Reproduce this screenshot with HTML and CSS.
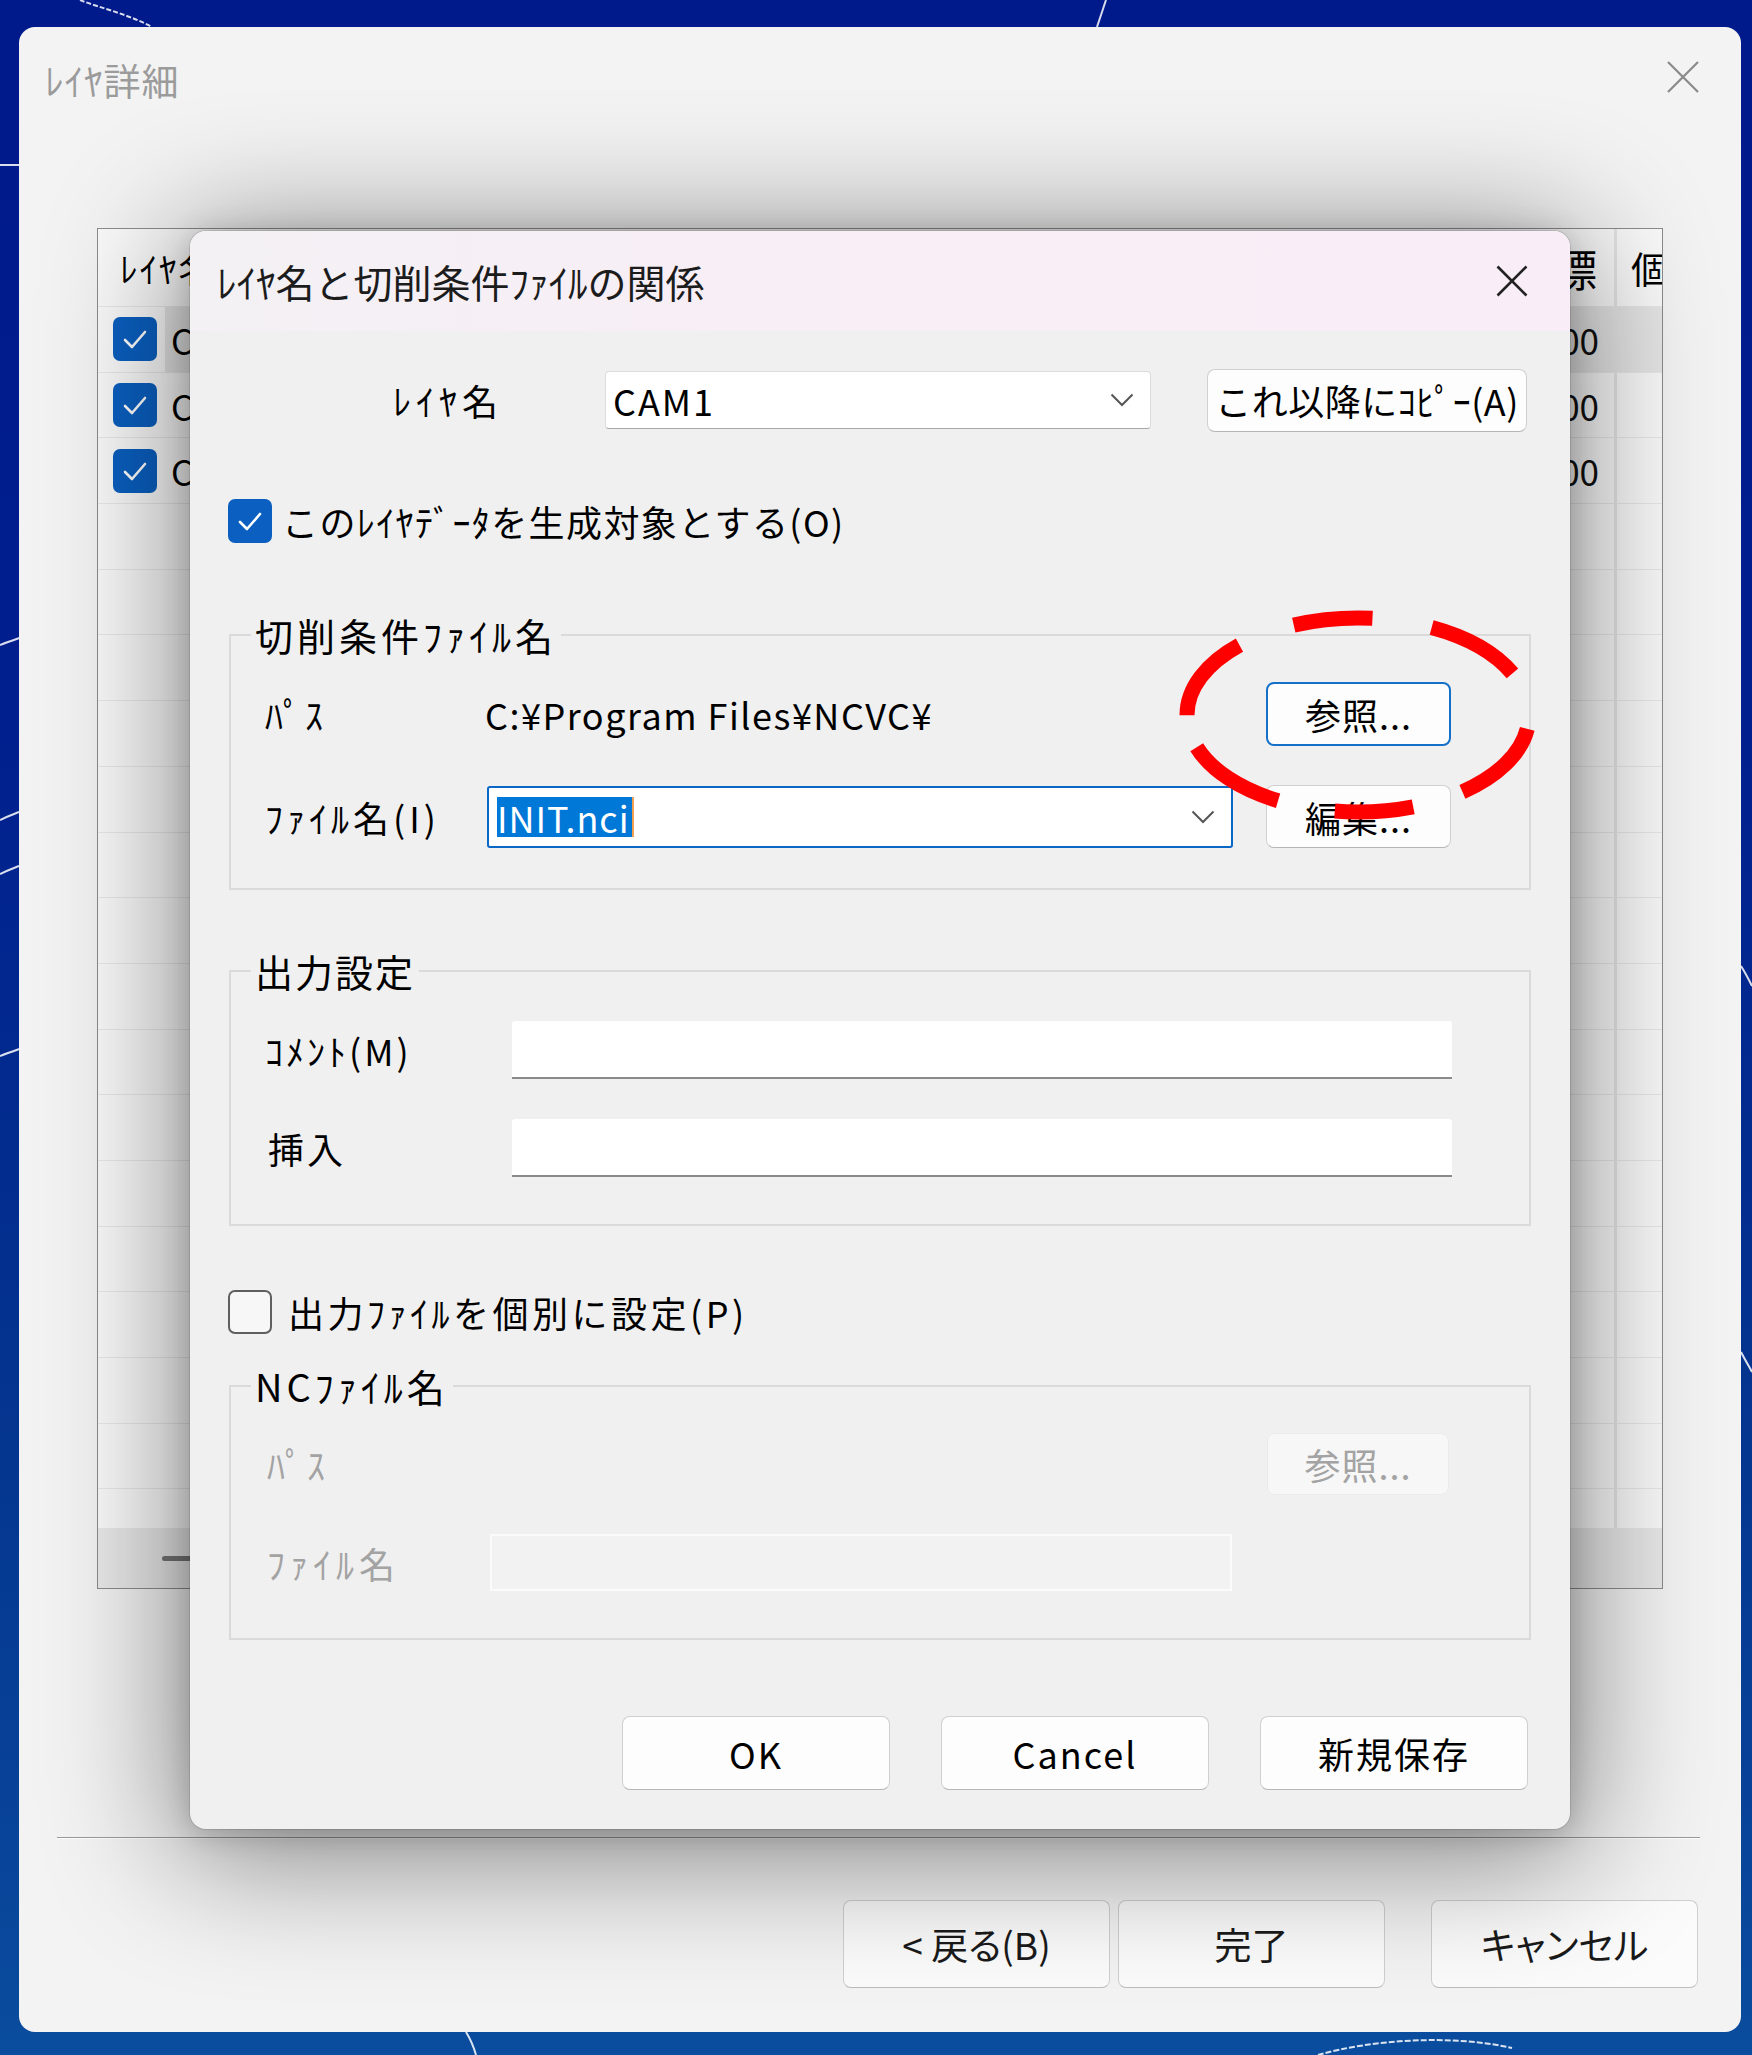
FILE: index.html
```html
<!DOCTYPE html>
<html lang="ja">
<head>
<meta charset="utf-8">
<title>レイヤ詳細</title>
<link rel="stylesheet" href="styles.css">
</head>
<body>
<svg class="wallpaper" width="1752" height="2055" viewBox="0 0 1752 2055">
  <g fill="none" stroke="#ffffff" stroke-width="2" opacity="0.85">
    <path d="M80,0 C100,8 128,14 152,27" stroke-dasharray="5 2"/>
    <path d="M1106,0 L1097,27"/>
    <path d="M0,165 L19,165"/>
    <path d="M0,645 C8,642 14,640 19,638"/>
    <path d="M0,820 C8,816 14,814 19,812"/>
    <path d="M0,874 C8,870 14,868 19,866"/>
    <path d="M0,1056 C8,1053 14,1051 19,1049"/>
    <path d="M1741,966 C1746,974 1749,980 1752,986"/>
    <path d="M1741,1352 C1745,1360 1749,1366 1752,1372"/>
    <path d="M466,2032 C471,2040 474,2048 476,2055"/>
    <path d="M1318,2055 C1370,2040 1450,2034 1512,2048" stroke-dasharray="6 2"/>
  </g>
</svg>

<div class="window">
  <div class="win-title">
    <span class="win-title-text">ﾚｲﾔ詳細</span>
    <svg class="win-close" width="34" height="34" viewBox="0 0 34 34"><path d="M2,2 L32,32 M32,2 L2,32" stroke="#8a8a8a" stroke-width="2.2" fill="none"/></svg>
  </div>

  <div class="list">
    <div class="list-head">
      <div class="lh-name">ﾚｲﾔ名</div>
      <div class="lh-num"><span>原点座標</span></div>
      <div class="lh-cnt">個数</div>
    </div>
    <div class="list-body">
      <div class="lrow sel">
        <div class="lc-name"><span class="cb small"><svg width="44" height="44" viewBox="0 0 44 44"><path d="M12,23 L19,30 L32,15" stroke="#fff" stroke-width="2.6" fill="none" stroke-linecap="round" stroke-linejoin="round"/></svg></span><span class="lname">CAM1</span></div>
        <div class="lc-num">0.00</div>
        <div class="lc-cnt"></div>
      </div>
      <div class="lrow">
        <div class="lc-name"><span class="cb small"><svg width="44" height="44" viewBox="0 0 44 44"><path d="M12,23 L19,30 L32,15" stroke="#fff" stroke-width="2.6" fill="none" stroke-linecap="round" stroke-linejoin="round"/></svg></span><span class="lname">CAM2</span></div>
        <div class="lc-num">0.00</div>
        <div class="lc-cnt"></div>
      </div>
      <div class="lrow">
        <div class="lc-name"><span class="cb small"><svg width="44" height="44" viewBox="0 0 44 44"><path d="M12,23 L19,30 L32,15" stroke="#fff" stroke-width="2.6" fill="none" stroke-linecap="round" stroke-linejoin="round"/></svg></span><span class="lname">CAM3</span></div>
        <div class="lc-num">0.00</div>
        <div class="lc-cnt"></div>
      </div>
      <div class="lrow"><div class="lc-name"></div><div class="lc-num"></div><div class="lc-cnt"></div></div>
      <div class="lrow"><div class="lc-name"></div><div class="lc-num"></div><div class="lc-cnt"></div></div>
      <div class="lrow"><div class="lc-name"></div><div class="lc-num"></div><div class="lc-cnt"></div></div>
      <div class="lrow"><div class="lc-name"></div><div class="lc-num"></div><div class="lc-cnt"></div></div>
      <div class="lrow"><div class="lc-name"></div><div class="lc-num"></div><div class="lc-cnt"></div></div>
      <div class="lrow"><div class="lc-name"></div><div class="lc-num"></div><div class="lc-cnt"></div></div>
      <div class="lrow"><div class="lc-name"></div><div class="lc-num"></div><div class="lc-cnt"></div></div>
      <div class="lrow"><div class="lc-name"></div><div class="lc-num"></div><div class="lc-cnt"></div></div>
      <div class="lrow"><div class="lc-name"></div><div class="lc-num"></div><div class="lc-cnt"></div></div>
      <div class="lrow"><div class="lc-name"></div><div class="lc-num"></div><div class="lc-cnt"></div></div>
      <div class="lrow"><div class="lc-name"></div><div class="lc-num"></div><div class="lc-cnt"></div></div>
      <div class="lrow"><div class="lc-name"></div><div class="lc-num"></div><div class="lc-cnt"></div></div>
      <div class="lrow"><div class="lc-name"></div><div class="lc-num"></div><div class="lc-cnt"></div></div>
      <div class="lrow"><div class="lc-name"></div><div class="lc-num"></div><div class="lc-cnt"></div></div>
      <div class="lrow"><div class="lc-name"></div><div class="lc-num"></div><div class="lc-cnt"></div></div>
      <div class="lrow"><div class="lc-name"></div><div class="lc-num"></div><div class="lc-cnt"></div></div>
      <div class="lrow"><div class="lc-name"></div><div class="lc-num"></div><div class="lc-cnt"></div></div>
    </div>
    <div class="list-hscroll"><span class="thumb"></span></div>
  </div>

  <div class="win-sep"></div>

  <div class="win-btns">
    <div class="wbtn">&lt; 戻る(B)</div>
    <div class="wbtn b2">完了</div>
    <div class="wbtn b3">キャンセル</div>
  </div>

  <div class="dialog">
    <div class="d-title">
      <span class="d-title-text">ﾚｲﾔ名と切削条件ﾌｧｲﾙの関係</span>
      <svg class="d-close" width="32" height="32" viewBox="0 0 32 32"><path d="M1.5,1.5 L30.5,30.5 M30.5,1.5 L1.5,30.5" stroke="#222" stroke-width="2.6" fill="none"/></svg>
    </div>

    <div class="row-layer">
      <span class="lbl lbl-layer">ﾚｲﾔ名</span>
      <div class="combo">
        <span class="combo-text">CAM1</span>
        <svg class="chev" width="24" height="14" viewBox="0 0 24 14"><path d="M1.5,1.5 L12,12 L22.5,1.5" stroke="#555" stroke-width="2" fill="none"/></svg>
      </div>
      <div class="btn btn-copy">これ以降にｺﾋﾟｰ(A)</div>
    </div>

    <div class="check-row">
      <span class="cb"><svg width="44" height="44" viewBox="0 0 44 44"><path d="M12,23 L19,30 L32,15" stroke="#fff" stroke-width="2.6" fill="none" stroke-linecap="round" stroke-linejoin="round"/></svg></span>
      <span class="cb-text">このﾚｲﾔﾃﾞｰﾀを生成対象とする(O)</span>
    </div>

    <fieldset class="group g1">
      <legend>切削条件ﾌｧｲﾙ名</legend>
      <div class="frow r-path">
        <span class="lbl w-path">ﾊﾟｽ</span>
        <span class="path-text">C:¥Program Files¥NCVC¥</span>
        <div class="btn btn-small focus">参照...</div>
      </div>
      <div class="frow r-file">
        <span class="lbl w-file">ﾌｧｲﾙ名(I)</span>
        <div class="combo combo-focus">
          <span class="sel-text">INIT.nci</span>
          <svg class="chev" width="24" height="14" viewBox="0 0 24 14"><path d="M1.5,1.5 L12,12 L22.5,1.5" stroke="#555" stroke-width="2" fill="none"/></svg>
        </div>
        <div class="btn btn-small edit">編集...</div>
      </div>
    </fieldset>

    <fieldset class="group g2">
      <legend>出力設定</legend>
      <div class="frow r-comment">
        <span class="lbl w-comment">ｺﾒﾝﾄ(M)</span>
        <div class="edit-box"></div>
      </div>
      <div class="frow r-insert">
        <span class="lbl w-comment ins">挿入</span>
        <div class="edit-box"></div>
      </div>
    </fieldset>

    <div class="check-row c2">
      <span class="cb off"></span>
      <span class="cb-text t2">出力ﾌｧｲﾙを個別に設定(P)</span>
    </div>

    <fieldset class="group g3">
      <legend>NCﾌｧｲﾙ名</legend>
      <div class="frow r-path3">
        <span class="lbl dis">ﾊﾟｽ</span>
        <div class="btn btn-small disabled">参照...</div>
      </div>
      <div class="frow r-file3">
        <span class="lbl dis w-file3">ﾌｧｲﾙ名</span>
        <div class="edit-dis"></div>
      </div>
    </fieldset>

    <div class="d-buttons">
      <div class="btn dbtn">OK</div>
      <div class="btn dbtn">Cancel</div>
      <div class="btn dbtn">新規保存</div>
    </div>

    <svg class="mark" width="380" height="230" viewBox="0 0 380 230">
      <ellipse cx="190" cy="112" rx="171" ry="97" fill="none" stroke="#ff0000" stroke-width="15" pathLength="858.4" stroke-dasharray="93.5 51.5 79 57.5 99.5 34 92 58 79.5 59.7 94.4 59.8" stroke-dashoffset="-14"/>
    </svg>
  </div>
</div>
</body>
</html>
```

FILE: styles.css
```css
* { box-sizing: border-box; }

html, body { margin: 0; }

body {
  width: 1752px;
  height: 2055px;
  overflow: hidden;
  position: relative;
  padding: 27px 0 0 19px;
  background: linear-gradient(180deg, #00198b 0%, #001f8e 35%, #04358f 70%, #0a4c9e 100%);
  font-family: "Noto Sans CJK JP", "Noto Sans", sans-serif;
  color: #000;
}

.wallpaper {
  position: absolute;
  left: 0;
  top: 0;
}

/* ---------- outer window ---------- */
.window {
  position: relative;
  width: 1722px;
  height: 2005px;
  background: #f3f3f3;
  border-radius: 16px;
  display: flex;
  flex-direction: column;
}

.win-title {
  height: 100px;
  flex: none;
  display: flex;
  align-items: center;
  padding: 6px 41px 0 26px;
}

.win-title-text {
  font-size: 37px;
  color: #9b9b9b;
  letter-spacing: 1px;
}

.win-close { margin-left: auto; margin-top: -6px; }

.list {
  margin: 101px 0 0 78px;
  width: 1566px;
  height: 1361px;
  flex: none;
  border: 1px solid #8c8c8c;
  background: #fafafa;
  display: flex;
  flex-direction: column;
  overflow: hidden;
}

.list-head {
  height: 77px;
  flex: none;
  display: grid;
  grid-template-columns: 1fr 160px 48px;
  align-items: center;
  font-size: 35px;
  white-space: nowrap;
}

.lh-name { padding-left: 22px; letter-spacing: 2px; }
.lh-num {
  display: flex;
  justify-content: flex-end;
  padding-right: 17px;
  font-size: 44px;
  min-width: 0;
}
.lh-num span { flex: none; }
.lh-cnt { padding-left: 14px; overflow: hidden; border-left: 3px solid #e6e6e6; height: 100%; display: flex; align-items: center; font-size: 37px; }

.list-body { flex: 1; overflow: hidden; }

.lrow {
  height: 65.7px;
  display: grid;
  grid-template-columns: 1fr 160px 48px;
  align-items: center;
  border-top: 1px solid #e8e8e8;
  font-size: 35px;
}

.lrow.sel { background: linear-gradient(90deg, transparent 67px, #e6e6e6 67px); }

.lc-name { display: flex; align-items: center; height: 100%; }
.lc-num { text-align: right; padding-right: 15px; color: #111; }
.lc-cnt { height: 100%; border-left: 3px solid #e6e6e6; }

.cb {
  width: 44px;
  height: 44px;
  flex: none;
  border-radius: 7px;
  background: #0a5fc0;
  display: flex;
  align-items: center;
  justify-content: center;
}

.cb.small { margin-left: 15px; }
.lname { margin-left: 14px; }

.cb.off {
  background: #f7f7f7;
  border: 2px solid #5f5f5f;
}

.list-hscroll {
  height: 60px;
  flex: none;
  background: #e9e9e9;
  display: flex;
  align-items: center;
}

.thumb {
  margin-left: 64px;
  width: 30px;
  height: 5px;
  border-radius: 3px;
  background: #777;
}

.win-sep {
  margin: 248px 0 0 38px;
  width: 1643px;
  height: 2px;
  flex: none;
  border-top: 1px solid #9a9a9a;
  border-bottom: 1px solid #ffffff;
}

.win-btns {
  display: flex;
  margin: 61px 0 0 824px;
}

.wbtn {
  width: 267px;
  height: 88px;
  border: 1px solid #cfcfcf;
  border-bottom-color: #bdbdbd;
  border-radius: 8px;
  background: #fbfbfb;
  display: flex;
  align-items: center;
  justify-content: center;
  font-size: 37px;
  font-feature-settings: "palt";
  color: #1a1a1a;
}

.wbtn.b2 { margin-left: 8px; }
.wbtn.b3 { margin-left: 46px; }

/* ---------- inner dialog ---------- */
.dialog {
  position: absolute;
  left: 171px;
  top: 204px;
  width: 1380px;
  height: 1598px;
  background: #f0f0f0;
  border-radius: 16px;
  box-shadow: 0 0 0 1px rgba(0, 0, 0, 0.10), 0 16px 130px 14px rgba(0, 0, 0, 0.45), 0 4px 30px rgba(0, 0, 0, 0.18);
  font-size: 36px;
  line-height: 40px;
  letter-spacing: 1px;
}

.d-title {
  height: 100px;
  display: flex;
  align-items: center;
  padding: 0 42px 0 27px;
  border-radius: 16px 16px 0 0;
  background: linear-gradient(90deg, #f3f1f4 0%, #f8eef6 40%, #f9eef7 100%);
}

.d-title-text {
  font-size: 39px;
  color: #1c1c1c;
  letter-spacing: 0;
  line-height: 44px;
}

.d-close { margin-left: auto; }

.lbl { white-space: nowrap; letter-spacing: 4px; }

.row-layer {
  display: flex;
  align-items: center;
  margin-top: 37px;
  height: 64px;
}

.lbl-layer { margin-left: 203px; width: 212px; letter-spacing: 5px; }

.combo {
  width: 546px;
  height: 58px;
  background: #fff;
  border: 1px solid #dcdcdc;
  border-bottom-color: #a8a8a8;
  border-radius: 4px;
  display: flex;
  align-items: center;
  padding: 0 16px 0 7px;
}

.combo-text { letter-spacing: 2px; }

.chev { margin-left: auto; }

.btn {
  background: #fdfdfd;
  border: 1px solid #d0d0d0;
  border-bottom-color: #b6b6b6;
  border-radius: 8px;
  display: flex;
  align-items: center;
  justify-content: center;
  white-space: nowrap;
}

.btn-copy {
  margin-left: 56px;
  width: 320px;
  height: 63px;
  letter-spacing: 0.5px;
}

.check-row {
  display: flex;
  align-items: center;
  height: 44px;
  margin: 67px 0 0 38px;
}

.cb-text { margin-left: 10px; letter-spacing: 1.4px; }
.cb-text.t2 { margin-left: 16px; letter-spacing: 3.5px; }
.check-row.c2 { margin-top: 64px; }

.group {
  margin: 72px 0 0 39px;
  width: 1302px;
  border: 2px solid #dadada;
  padding: 0 0 40px 0;
  min-width: 0;
}

.group legend {
  margin-left: 20px;
  padding: 0 4px;
  line-height: 40px;
  height: 40px;
  font-size: 38px;
  letter-spacing: 4px;
}

.g2 legend { letter-spacing: 2px; }

.frow {
  display: flex;
  align-items: center;
  margin-left: 34px;
}

.r-path { margin-top: 27px; height: 64px; }
.w-path { width: 220px; }
.path-text { flex: 1; letter-spacing: 1.5px; }

.btn-small {
  width: 185px;
  height: 64px;
  margin-right: 78px;
}

.btn-small.focus {
  border: 2px solid #1470c8;
}

.r-file { margin-top: 39px; height: 63px; }
.w-file { width: 222px; }

.combo-focus {
  width: 746px;
  height: 62px;
  border: 2px solid #0a67c6;
  border-radius: 3px;
  padding: 0 16px 0 8px;
}

.sel-text {
  background: #0078d7;
  color: #fff;
  height: 40px;
  line-height: 40px;
  padding-right: 2px;
  border-right: 2px solid #f0a050;
  letter-spacing: 1px;
}

.btn-small.edit {
  margin-left: 33px;
  height: 63px;
}

.g2 { margin-top: 61px; padding-bottom: 47px; }
.r-comment { margin-top: 30px; height: 58px; }
.r-insert { margin-top: 40px; height: 58px; }
.w-comment { width: 247px; letter-spacing: 3px; }
.ins { padding-left: 3px; }

.edit-box {
  width: 940px;
  height: 58px;
  background: #fff;
  border-bottom: 2px solid #8a8a8a;
  border-radius: 3px 3px 0 0;
}

.g3 { margin-top: 32px; padding-bottom: 47px; }
.r-path3 { margin-top: 27px; height: 62px; padding-left: 2px; }
.r-path3 .btn-small { margin-left: auto; margin-right: 80px; width: 182px; height: 62px; letter-spacing: 1px; }
.r-file3 { margin-top: 39px; height: 57px; padding-left: 2px; }
.w-file3 { width: 223px; letter-spacing: 5px; }

.dis { color: #a3a3a3; }

.btn-small.disabled {
  background: #f7f7f7;
  border-color: #ebebeb;
  color: #a3a3a3;
}

.edit-dis {
  width: 742px;
  height: 57px;
  background: #f2f2f2;
  border: 2px solid #fbfbfb;
}

.d-buttons {
  display: flex;
  justify-content: flex-end;
  gap: 51px;
  padding-right: 42px;
  margin-top: 76px;
}

.dbtn {
  width: 268px;
  height: 74px;
  letter-spacing: 2px;
}

.mark {
  position: absolute;
  left: 978px;
  top: 372px;
}
```
